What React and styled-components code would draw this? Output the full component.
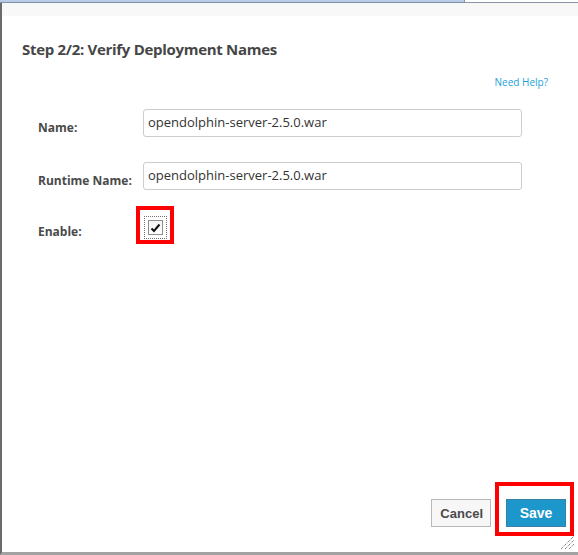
import React from 'react';
import styled, { createGlobalStyle } from 'styled-components';

const GlobalStyle = createGlobalStyle`
  html, body {
    margin: 0;
    padding: 0;
    background: #fff;
  }
  body {
    font-family: "Open Sans", "Noto Sans", Arial, sans-serif;
    overflow: hidden;
  }
`;

const Page = styled.div`
  width: 578px;
  height: 555px;
  display: flex;
  flex-direction: column;
`;

const TopStrip = styled.div`
  height: 3px;
  display: flex;
  flex-shrink: 0;
`;

const TabLeft = styled.div`
  width: 464px;
  background: #b8cce4;
  border-bottom: 1px solid #7f93ab;
  box-sizing: border-box;
`;

const TabRight = styled.div`
  flex: 1;
  background: #fff;
  border-bottom: 1px solid #8b97a5;
  border-left: 1px solid #7f93ab;
  box-sizing: border-box;
`;

const Dialog = styled.div`
  flex: 1;
  position: relative;
  display: flex;
  flex-direction: column;
  border-left: 2px solid #6a6a6a;
  border-bottom: 3px solid #a2a2a2;
  box-sizing: border-box;
  background: #fff;
`;

const HeaderBar = styled.div`
  height: 13px;
  background: #f8f8f8;
`;

const Title = styled.h2`
  margin: 23px 0 0 20px;
  font-size: 15px;
  line-height: 20px;
  font-weight: 700;
  letter-spacing: -0.3px;
  color: #464646;
`;

const HelpRow = styled.div`
  margin-top: 14px;
  padding-right: 30px;
  text-align: right;
  line-height: 14px;
`;

const HelpLink = styled.a`
  font-size: 10px;
  color: #1a9fda;
  text-decoration: none;
`;

const Form = styled.div`
  margin-top: 20px;
  padding-left: 36px;
  display: flex;
  flex-direction: column;
`;

const Row = styled.div`
  display: flex;
  align-items: ${(p) => p.$align || 'flex-end'};
  margin-top: ${(p) => p.$top || 0}px;
`;

const Label = styled.label`
  width: 105px;
  flex-shrink: 0;
  font-size: 12px;
  line-height: 16px;
  font-weight: 700;
  color: #4a4a4a;
  padding-bottom: ${(p) => p.$pb || 1}px;
  padding-top: ${(p) => p.$pt || 0}px;
`;

const TextInput = styled.input`
  width: 379px;
  height: 28px;
  box-sizing: border-box;
  border: 1px solid #cdcdcd;
  border-radius: 3px;
  padding: 0 0 2px 4px;
  font-family: "Open Sans", "Noto Sans", Arial, sans-serif;
  font-size: 13px;
  color: #333;
  background: #fff;
  outline: none;
`;

const Highlight = styled.div`
  border: 4px solid #ff0000;
  box-sizing: border-box;
  display: flex;
`;

const CheckHighlight = styled(Highlight)`
  width: 38px;
  height: 38px;
  margin-left: -7px;
  padding: 6px 0 0 4px;
`;

const FocusRing = styled.div`
  width: 23px;
  height: 23px;
  box-sizing: border-box;
  border: 1px dotted #6f6f6f;
  display: flex;
  align-items: center;
  justify-content: center;
`;

const CheckBox = styled.span`
  width: 15px;
  height: 15px;
  box-sizing: border-box;
  border: 1px solid #8e8f8f;
  background: linear-gradient(#f4f4f4, #ffffff);
  display: flex;
  align-items: center;
  justify-content: center;
`;

const Footer = styled.div`
  margin-top: auto;
  padding: 0 4px 16px 0;
  display: flex;
  justify-content: flex-end;
  align-items: flex-end;
  gap: 4px;
`;

const Button = styled.button`
  height: 28px;
  box-sizing: border-box;
  font-family: "Liberation Sans", Arial, sans-serif;
  font-weight: 700;
  cursor: pointer;
`;

const CancelButton = styled(Button)`
  margin-bottom: 9px;
  padding: 0 7px 0 8px;
  background: #f7f7f7;
  border: 1px solid #b9b9b9;
  color: #4a4a4a;
  font-size: 13px;
`;

const SaveHighlight = styled(Highlight)`
  padding: 13px 4px 5px 7px;
`;

const SaveButton = styled(Button)`
  width: 60px;
  background: #1b97cb;
  border: 1px solid #3c7fa5;
  color: #fff;
  font-size: 14px;
`;

const Grip = styled.svg`
  position: absolute;
  right: 3px;
  bottom: 2px;
`;

function ResizeGrip() {
  return (
    <Grip width="15" height="15" viewBox="0 0 15 15">
      <g stroke="#555" strokeWidth="1" strokeDasharray="1 1">
        <line x1="1" y1="14" x2="14" y2="1" />
        <line x1="5" y1="14" x2="14" y2="5" />
        <line x1="9" y1="14" x2="14" y2="9" />
      </g>
    </Grip>
  );
}

export default function App() {
  return (
    <>
      <GlobalStyle />
      <Page>
        <TopStrip>
          <TabLeft />
          <TabRight />
        </TopStrip>
        <Dialog>
          <HeaderBar />
          <Title>Step 2/2: Verify Deployment Names</Title>
          <HelpRow>
            <HelpLink href="#">Need Help?</HelpLink>
          </HelpRow>
          <Form>
            <Row>
              <Label>Name:</Label>
              <TextInput defaultValue="opendolphin-server-2.5.0.war" />
            </Row>
            <Row $top={25}>
              <Label>Runtime Name:</Label>
              <TextInput defaultValue="opendolphin-server-2.5.0.war" />
            </Row>
            <Row $top={16} $align="center">
              <Label $pt={14} $pb={0}>Enable:</Label>
              <CheckHighlight>
                <FocusRing>
                  <CheckBox>
                    <svg width="11" height="10" viewBox="0 0 11 10">
                      <path d="M1.5 5.5 L4 8 L9.5 1.5" fill="none" stroke="#111" strokeWidth="2" />
                    </svg>
                  </CheckBox>
                </FocusRing>
              </CheckHighlight>
            </Row>
          </Form>
          <Footer>
            <CancelButton>Cancel</CancelButton>
            <SaveHighlight>
              <SaveButton>Save</SaveButton>
            </SaveHighlight>
          </Footer>
          <ResizeGrip />
        </Dialog>
      </Page>
    </>
  );
}
